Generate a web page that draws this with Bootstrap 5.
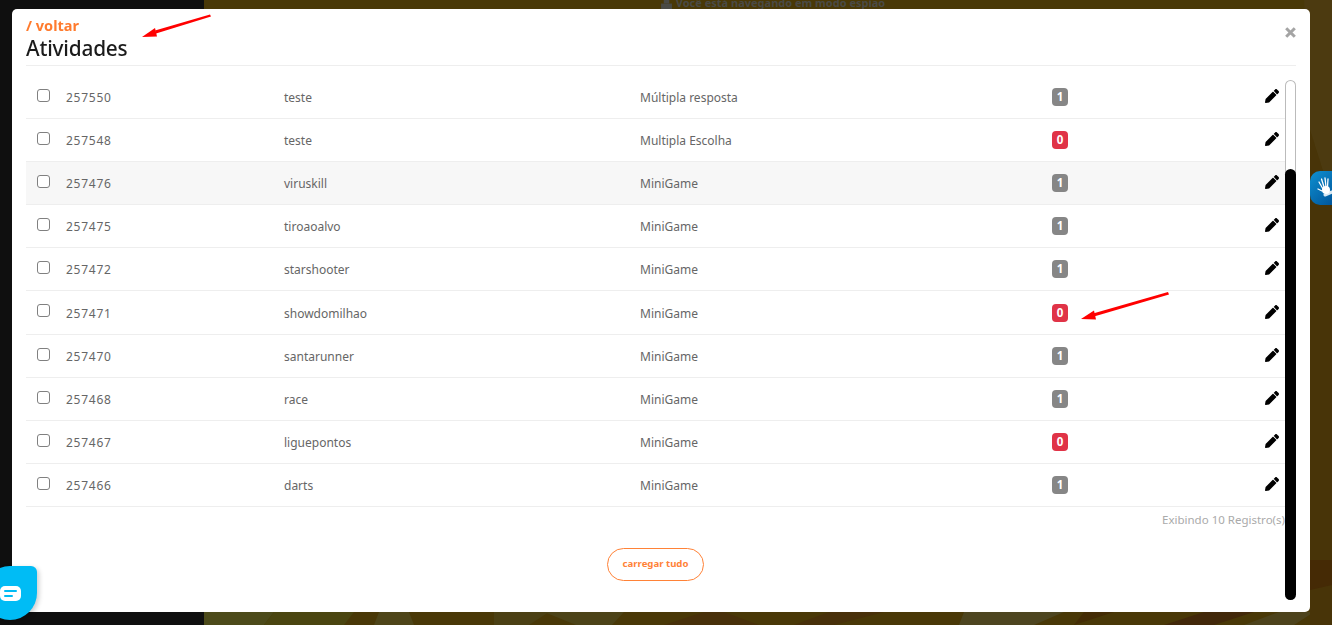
<!doctype html>
<html lang="pt-BR">
<head>
<meta charset="utf-8">
<title>Atividades</title>
<link href="https://cdn.jsdelivr.net/npm/bootstrap@5.3.0/dist/css/bootstrap.min.css" rel="stylesheet">
<style>
html,body{height:625px;overflow:hidden}
body{font-family:"Noto Sans","Open Sans",sans-serif;background:#0f0f0f;color:#666}
.stage{height:625px}
.side-dark{width:204px;background:#0f0f0f;flex:none}
.main-bg{position:relative;background:#493807;overflow:hidden}
.poly-bg{position:absolute;inset:0;width:100%;height:100%}
.spy-text{position:relative;color:#4a4a45;font-size:11px;font-weight:700;line-height:14px;margin-top:-4px;padding-left:10px}
.sheet{position:fixed;left:12px;top:9px;width:1298px;height:603px;background:#fff;border-radius:5px;padding:0 14px}
.sheet-head{height:57px;border-bottom:1px solid #eee;position:relative}
.back-link{display:block;font-size:14.5px;font-weight:700;color:#ff7b2e;line-height:18px;padding-top:7px;height:26px;text-decoration:none}
.sheet-title{font-size:20.8px;font-weight:500;color:#1b1b1b;line-height:27px;margin:0;letter-spacing:-.2px}
.close-x{position:absolute;right:0;top:18px;width:11px;height:11px;padding:0;border:0;background:none;display:flex}
.body-wrap{margin-top:10px}
.list-col{width:1259px;flex:none}
.rows{table-layout:fixed;width:1259px;margin:0;font-size:12px;color:#666;border-collapse:separate;border-spacing:0}
.rows td{height:43px;padding:2px 11px 0;border-bottom:1px solid #eee;vertical-align:middle;color:#666;box-shadow:none;background:transparent}
.rows tr:nth-child(6) td{height:44px}
.rows tr.hl td{background:#f7f7f7}
.rows .id-cell{letter-spacing:.75px}
.chk{width:13px;height:13px;margin:0;display:block;border:1px solid #808080;border-radius:3px;position:relative;top:-3px}
.cnt{display:block;width:16px;height:18px;line-height:18px;padding:0;font-size:11.5px;font-weight:700;border-radius:4px;color:#fff;text-align:center;position:relative;top:-1px}
.cnt-g{background:#868686}
.cnt-r{background:#e03347}
.pen{display:block;width:14px;height:14px;position:relative;top:-2px}
.reg-count{text-align:right;font-size:11.5px;color:#aaa;line-height:16px;margin-top:5px}
.load-btn{width:97px;height:33px;padding:0;border:1px solid #ff8237;border-radius:17px;background:#fff;color:#ff8237;font-size:9.6px;font-weight:700;margin-top:20px}
.track{width:11px;height:520px;flex:none;margin-top:4px;box-shadow:inset 0 0 0 1px #bbb;border-radius:6px;background:#fff;display:flex;flex-direction:column}
.thumb{margin-top:auto;height:431px;background:#000;border-radius:6px;flex:none}
.arrow-layer{position:fixed;inset:0;width:1332px;height:625px;pointer-events:none}
.chat-fab{position:fixed;left:-17px;top:566px;width:54px;height:54px;background:#00bcf5;border-radius:50% 6px 50% 50%;box-shadow:2px 2px 5px rgba(0,0,0,.2);display:flex;align-items:center;justify-content:flex-end;padding:0 16px 0 0;border:0}
.chat-ico{width:21px;height:15px;background:#fff;border-radius:5px;display:flex;flex-direction:column;justify-content:center;gap:3px;padding-left:4px}
.chat-ico span{display:block;height:2px;background:#00bcf5;border-radius:1px}
.chat-ico span:first-child{width:13px}
.chat-ico span:last-child{width:9px}
.vl-tab{position:fixed;left:1310px;top:171px;width:22px;height:34px;border-radius:10px 0 0 10px;background:linear-gradient(135deg,#0f90d0,#00569c);overflow:hidden}
</style>
</head>
<body>
<div class="stage d-flex">
  <div class="side-dark"></div>
  <div class="main-bg flex-grow-1">
    <svg class="poly-bg" viewBox="0 0 1128 625" preserveAspectRatio="none" aria-hidden="true">
      <polygon points="0,612 70,612 60,625 0,625" fill="#4c4a1a"/>
      <polygon points="70,612 150,612 140,625 60,625" fill="#4a4510"/>
      <polygon points="175,612 205,612 210,625 170,625" fill="#4e4519"/>
      <polygon points="290,612 345,612 325,625 290,625" fill="#4b4014"/>
      <polygon points="340,612 420,612 408,625 372,625" fill="#4c4318"/>
      <polygon points="500,612 520,612 555,625 460,625" fill="#48300a"/>
      <polygon points="625,612 680,612 630,625 590,625" fill="#48300a"/>
      <polygon points="760,612 860,612 830,625 755,625" fill="#4d4520"/>
      <polygon points="880,612 910,612 870,625" fill="#442c05"/>
      <polygon points="1000,612 1050,612 1010,625 960,625" fill="#42280a"/>
      <polygon points="1040,625 1075,612 1110,612 1090,625" fill="#4d431c"/>
      <polygon points="1100,0 1128,0 1128,200 1106,130" fill="#4c3a10"/>
      <polygon points="1106,130 1128,200 1128,625 1106,625" fill="#483408"/>
      <polygon points="1106,560 1128,560 1128,585 1106,590" fill="#452a05"/>
    </svg>
    <div class="spy-text text-center">
      <svg width="11" height="10" viewBox="0 0 12 11" aria-hidden="true" class="me-1"><rect x="0" y="5" width="12" height="6" fill="#4a4a45"/><rect x="3" y="0" width="6" height="5" fill="#4a4a45"/></svg>Você está navegando em modo espião
    </div>
  </div>
</div>

<div class="sheet">
  <div class="sheet-head">
    <a class="back-link" href="#">/ voltar</a>
    <h5 class="sheet-title">Atividades</h5>
    <button class="close-x" type="button" aria-label="Fechar">
      <svg width="11" height="11" viewBox="0 0 11 11" aria-hidden="true"><path d="M1.2 1.2l8.6 8.6M9.8 1.2l-8.6 8.6" stroke="#a4a4a4" stroke-width="3"/></svg>
    </button>
  </div>
  <div class="body-wrap d-flex">
    <div class="list-col">
      <table class="table rows">
        <colgroup><col style="width:29px"><col style="width:218px"><col style="width:356px"><col style="width:412px"><col style="width:213px"><col style="width:31px"></colgroup>
        <tbody id="rows"></tbody>
      </table>
      <div class="reg-count">Exibindo 10 Registro(s)</div>
      <div class="text-center"><button class="btn load-btn" type="button">carregar tudo</button></div>
    </div>
    <div class="track"><div class="thumb"></div></div>
  </div>
</div>

<svg class="arrow-layer" viewBox="0 0 1332 625" aria-hidden="true">
  <polygon points="210,14.5 211,16.5 156,33.5 155,30.5" fill="#f00"/>
  <polygon points="142,37 155,28 157,36.5" fill="#f00"/>
  <polygon points="1168,292 1169,294.5 1094,316.5 1093,313.5" fill="#f00"/>
  <polygon points="1081,319 1094,310.5 1096,319.5" fill="#f00"/>
</svg>

<button class="chat-fab" type="button" aria-label="Chat"><span class="chat-ico"><span></span><span></span></span></button>

<div class="vl-tab">
  <svg width="22" height="34" viewBox="0 0 22 34" aria-hidden="true">
    <g fill="none" stroke="#fff" stroke-linecap="round">
      <path stroke-width="1.3" d="M13 18L9 11M14 16L11.5 8M16 16L15 7M17.5 16L18 8M12 20L8 18"/>
      <path stroke-width="3" stroke-opacity=".85" d="M15 24L22 21"/>
    </g>
    <circle cx="16" cy="19" r="4" fill="#fff"/>
  </svg>
</div>

<script>
var data=[["257550","teste","Múltipla resposta",1,0],["257548","teste","Multipla Escolha",0,0],["257476","viruskill","MiniGame",1,1],["257475","tiroaoalvo","MiniGame",1,0],["257472","starshooter","MiniGame",1,0],["257471","showdomilhao","MiniGame",0,0],["257470","santarunner","MiniGame",1,0],["257468","race","MiniGame",1,0],["257467","liguepontos","MiniGame",0,0],["257466","darts","MiniGame",1,0]];
var pen='<svg class="pen" viewBox="0 0 512 512" aria-hidden="true"><path fill="#000" d="M497.9 142.1l-46.1 46.1c-4.7 4.7-12.3 4.7-17 0l-111-111c-4.7-4.7-4.7-12.3 0-17l46.1-46.1c18.7-18.7 49.1-18.7 67.9 0l60.1 60.1c18.8 18.7 18.8 49.1 0 67.9zM284.2 99.8L21.6 362.4.4 483.9c-2.9 16.4 11.4 30.6 27.8 27.8l121.5-21.3 262.6-262.6c4.7-4.7 4.7-12.3 0-17l-111-111c-4.8-4.7-12.4-4.7-17.1 0z"/></svg>';
document.getElementById('rows').innerHTML=data.map(function(r){
 return '<tr'+(r[4]?' class="hl"':'')+'><td><input class="form-check-input chk" type="checkbox"></td><td class="id-cell">'+r[0]+'</td><td>'+r[1]+'</td><td>'+r[2]+'</td><td><span class="badge cnt '+(r[3]?'cnt-g':'cnt-r')+'">'+r[3]+'</span></td><td>'+pen+'</td></tr>';
}).join('');
</script>
<script src="https://cdn.jsdelivr.net/npm/bootstrap@5.3.0/dist/js/bootstrap.bundle.min.js"></script>
</body>
</html>
